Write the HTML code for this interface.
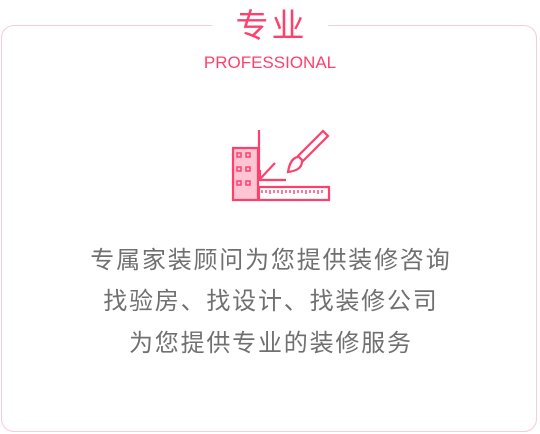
<!DOCTYPE html>
<html><head><meta charset="utf-8"><style>
body{margin:0;width:540px;height:434px;background:#fff;position:relative;overflow:hidden;font-family:"Liberation Sans","Noto Sans CJK SC",sans-serif}
.box{position:absolute;left:1px;top:25px;width:534px;height:405px;border:1.5px solid #fcc9d6;border-radius:13px}
.gap{position:absolute;left:212px;top:20px;width:116px;height:12px;background:#fff}
.t{position:absolute;left:0;width:540px;text-align:center}
.h{top:-1px;font-size:33px;color:#ff3f6c;letter-spacing:3px;text-indent:3px}
.p{top:53px;font-size:17px;color:#ff3f6c}
.l{font-size:24px;color:#707070;letter-spacing:1.8px;text-indent:1.8px}
</style></head><body>
<div class="box"></div><div class="gap"></div>
<div class="t h">专业</div>
<div class="t p">PROFESSIONAL</div>
<svg style="position:absolute;left:0;top:0" width="540" height="434" fill="none" stroke="#ff3f6c" stroke-width="2.2">
<rect x="233" y="148" width="25" height="52" fill="#ffc5d3"/>
<g stroke-width="1.5"><rect x="237" y="153" width="4" height="4"/><rect x="246" y="153" width="4" height="4"/><rect x="237" y="167" width="4" height="4"/><rect x="246" y="167" width="4" height="4"/><rect x="237" y="181" width="4" height="4"/><rect x="246" y="181" width="4" height="4"/></g>
<path d="M259 130V180H286M260 179L275 163M260 170V180"/>
<rect x="259" y="187" width="70" height="13"/>
<path stroke-width="1.4" d="M262 190v3M266 190v3M270 190v4M274 190v3M278 190v3M282 190v4M286 190v3M290 190v3M294 190v4M298 190v3M302 190v3M306 190v4M310 190v3M314 190v3M318 190v4M322 190v3"/>
<path d="M298 156L323 131L328 136L303 161Z"/>
<path d="M298 157C291 158 289 166 288 172C295 171 302 169 302 161"/>
</svg>
<div class="t l" style="top:240px">专属家装顾问为您提供装修咨询</div>
<div class="t l" style="top:281px">找验房、找设计、找装修公司</div>
<div class="t l" style="top:323px">为您提供专业的装修服务</div>
</body></html>
